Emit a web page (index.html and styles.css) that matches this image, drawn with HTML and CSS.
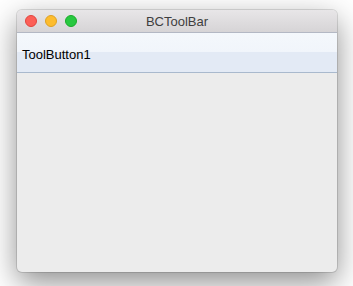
FILE: index.html
```html
<!DOCTYPE html>
<html lang="en">
<head>
    <meta charset="UTF-8">
    <title>BCToolBar</title>
    <link rel="stylesheet" href="styles.css">
</head>
<body>
    <div class="window">
        <div class="titlebar">
            <div class="lights">
                <span class="light close"></span>
                <span class="light min"></span>
                <span class="light max"></span>
            </div>
            <div class="title">BCToolBar</div>
        </div>
        <div class="toolbar">
            <button class="tool-button">ToolButton1</button>
        </div>
        <div class="content"></div>
    </div>
</body>
</html>
```

FILE: styles.css
```css
* {
    margin: 0;
    padding: 0;
    box-sizing: border-box;
}

body {
    width: 353px;
    height: 286px;
    background: #ffffff;
    font-family: "Liberation Sans", Arial, sans-serif;
    padding: 10px 16px 14px 17px;
    overflow: hidden;
}

.window {
    width: 320px;
    height: 262px;
    border-radius: 5px;
    background: #ececec;
    display: flex;
    flex-direction: column;
    overflow: hidden;
    box-shadow: 0 0 0 1px rgba(0, 0, 0, 0.12), 0 10px 30px rgba(0, 0, 0, 0.45);
}

.titlebar {
    height: 23px;
    background: linear-gradient(#e8e6e8, #d6d4d6);
    border-bottom: 1px solid #b3b8c4;
    position: relative;
    display: flex;
    align-items: center;
    justify-content: center;
}

.lights {
    position: absolute;
    left: 8px;
    top: 5px;
    display: flex;
    gap: 8px;
}

.light {
    width: 12px;
    height: 12px;
    border-radius: 50%;
}

.close {
    background: #fc5f57;
    border: 1px solid #e0443e;
}

.min {
    background: #fdbc2e;
    border: 1px solid #dea123;
}

.max {
    background: #28c840;
    border: 1px solid #1aab29;
}

.title {
    font-size: 13px;
    color: #3e3e3e;
    padding-top: 1px;
}

.toolbar {
    height: 40px;
    background: linear-gradient(#f4f8fc 0%, #f1f5fb 48%, #e3eaf5 50%, #e3eaf5 100%);
    border-bottom: 1px solid #a9b9cd;
    display: flex;
    align-items: center;
    padding: 3px 0 0 5px;
}

.tool-button {
    background: none;
    border: none;
    font-family: "Liberation Sans", Arial, sans-serif;
    font-size: 13px;
    color: #000;
    padding: 0;
}

.content {
    flex: 1;
}
```
